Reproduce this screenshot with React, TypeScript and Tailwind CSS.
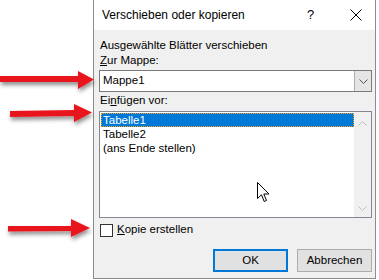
import React from "react";

const RedArrows = () => (
  <svg className="absolute left-0 top-0" width="100" height="280" viewBox="0 0 100 280">
    <defs>
      <filter id="shadow" x="-20%" y="-50%" width="140%" height="200%">
        <feDropShadow dx="1" dy="3" stdDeviation="2" floodColor="#000" floodOpacity="0.45" />
      </filter>
    </defs>
    <g fill="#e8161b" filter="url(#shadow)">
      <polygon points="0,76 78,76 78,71 94,79.5 78,89 78,82 0,82" />
      <polygon points="10,111 74,110 74,104 92,112.5 74,122 74,116 10,117" />
      <polygon points="8,226 71,226 71,219 90,228 71,237 71,231 8,231.5" />
    </g>
  </svg>
);

const Cursor = () => (
  <svg className="absolute left-[257px] top-[182px]" width="13" height="21" viewBox="0 0 13 21">
    <path d="M0.5 0.5 L0.5 16.5 L4.5 12.8 L7.2 19.5 L9.5 18.5 L6.8 12 L12 12 Z" fill="#fff" stroke="#000" strokeWidth="1" />
  </svg>
);

const Chevron = ({ up = false, color }: { up?: boolean; color: string }) => (
  <svg width="9" height="5" viewBox="0 0 9 5" className={up ? "rotate-180" : ""}>
    <path d="M0.5 0.5 L4.5 4.5 L8.5 0.5" fill="none" stroke={color} strokeWidth="1" />
  </svg>
);

export default function App() {
  return (
    <div className="relative flex h-[280px] w-[379px] overflow-hidden bg-white font-['Liberation_Sans',sans-serif] text-[11.5px] text-black">
      <RedArrows />
      <div className="ml-[93px] flex h-[279px] w-[283px] flex-col border border-t-0 border-[#8c8c8c] bg-[#f0f0f0]">
        <div className="flex h-[30px] items-center bg-white pl-[8px] text-[12px]">
          <span className="flex-1">Verschieben oder kopieren</span>
          <span className="w-[20px] text-[13px]">?</span>
          <svg className="ml-[23px] mr-[13px]" width="12" height="12" viewBox="0 0 12 12">
            <path d="M0.5 0.5 L11.5 11.5 M11.5 0.5 L0.5 11.5" stroke="#000" strokeWidth="1" />
          </svg>
        </div>
        <div className="flex flex-col pl-[5px] pt-[8px]">
          <div className="h-[14px] pl-[1px] leading-[14px]">Ausgewählte Blätter verschieben</div>
          <div className="mt-[1px] h-[14px] pl-[1px] leading-[14px]">
            <span className="underline">Z</span>ur Mappe:
          </div>
          <div className="mt-[3px] flex h-[22px] w-[273px] border border-[#7a7a7a] bg-white">
            <div className="flex flex-1 items-center pl-[3px]">Mappe1</div>
            <div className="flex w-[17px] items-center justify-center border-l border-[#adadad] bg-[#e5e5e5]">
              <Chevron color="#555" />
            </div>
          </div>
          <div className="mt-[1px] h-[14px] pl-[1px] leading-[14px]">
            Ei<span className="underline">n</span>fügen vor:
          </div>
          <div className="mt-[4px] flex h-[107px] w-[273px] border border-[#828790] bg-white">
            <div className="flex flex-1 flex-col pl-[1px] pt-[1px]">
              <div className="h-[14px] border border-dotted border-[#f7a21b] bg-[#0078d7] pl-[1px] leading-[12px] text-white">Tabelle1</div>
              <div className="h-[14px] pl-[2px] leading-[14px]">Tabelle2</div>
              <div className="h-[14px] pl-[2px] leading-[14px]">(ans Ende stellen)</div>
            </div>
            <div className="flex w-[17px] flex-col items-center justify-between bg-[#f0f0f0] pb-[6px] pt-[9px]">
              <Chevron up color="#c0c0c0" />
              <Chevron color="#c0c0c0" />
            </div>
          </div>
          <div className="mt-[5px] flex h-[14px] items-center">
            <div className="ml-[1px] h-[13px] w-[13px] border border-[#333] bg-white" />
            <span className="ml-[4px]">
              <span className="underline">K</span>opie erstellen
            </span>
          </div>
          <div className="mt-[12px] flex w-[273px] justify-end gap-[9px]">
            <button className="h-[23px] w-[75px] border-2 border-[#0078d7] bg-[#e1e1e1]">OK</button>
            <button className="h-[23px] w-[75px] border border-[#adadad] bg-[#e1e1e1]">Abbrechen</button>
          </div>
        </div>
      </div>
      <Cursor />
    </div>
  );
}
